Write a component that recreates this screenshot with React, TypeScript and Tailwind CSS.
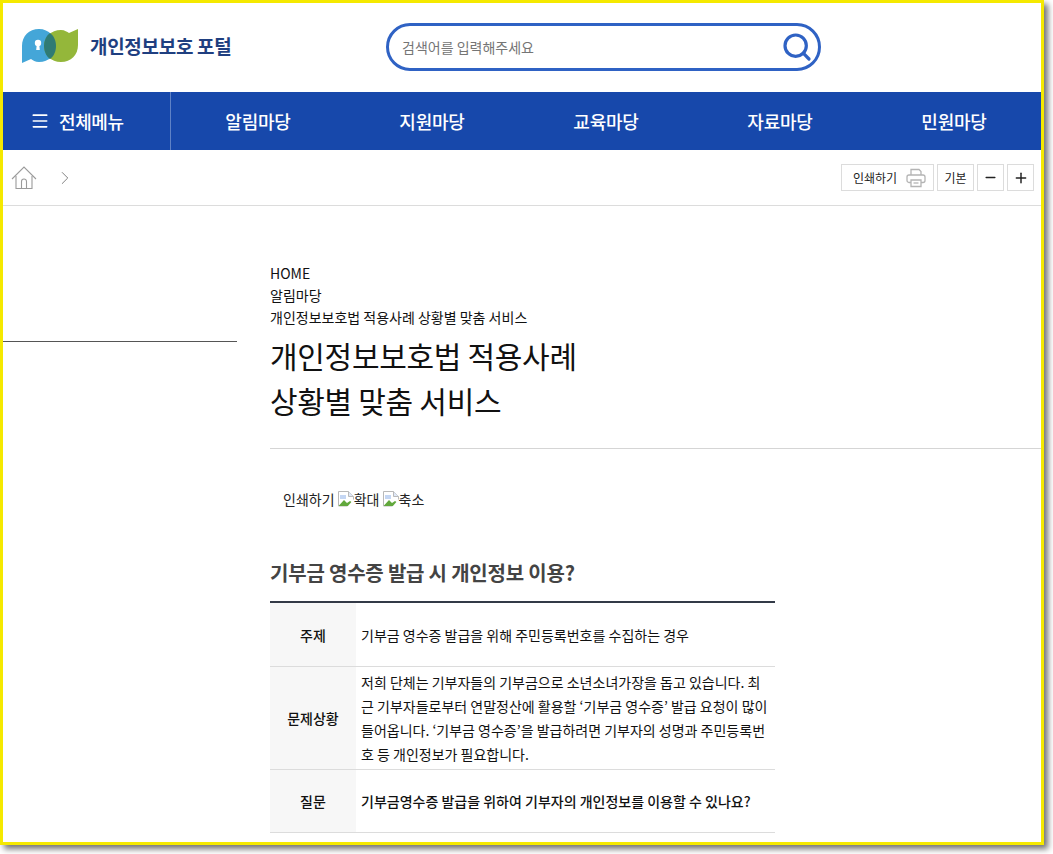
import { Menu, Search, Plus, Minus, ChevronRight } from "lucide-react";

const navItems = ["알림마당", "지원마당", "교육마당", "자료마당", "민원마당"];

const Logo = () => (
  <svg width="58" height="36" viewBox="0 0 58 36" className="shrink-0">
    <path d="M1 35V18C1 8 8 1 18 1c10 0 17 8 17 17s-7 16-17 16c-4 0-6-2-8-3-3 1-6 3-9 4z" fill="#44a6d8" />
    <path d="M57 1v16c0 10-7 17-17 17-10 0-17-7-17-16S30 2 40 2c4 0 6 2 8 3 3-1 6-3 9-4z" fill="#94b73a" />
    <path d="M29 5c4 3 6 8 6 13s-2 10-6 13c-4-3-6-8-6-13s2-10 6-13z" fill="#2f7b74" />
    <circle cx="17" cy="15" r="3.2" fill="#fff" />
    <path d="M15.8 16h2.4l.6 6h-3.6z" fill="#fff" />
  </svg>
);

const HomeIcon = () => (
  <svg width="26" height="24" viewBox="0 0 26 24" fill="none" stroke="#9b9b9b" strokeWidth="1.1">
    <path d="M1 13 13 1l12 12" />
    <path d="M5 10v12.500h16V10" />
    <path d="M10.500 22.500v-7a2.500 2.500 0 0 1 5 0v7" />
  </svg>
);

const PrintIcon = () => (
  <svg width="20" height="20" viewBox="0 0 20 20" fill="none" stroke="#b4b4b4" strokeWidth="1.300">
    <path d="M5 7V1.500h8L15 3.500V7" />
    <rect x="1" y="7" width="18" height="7.500" rx="2" />
    <path d="M5 12h10v6.500H5z" fill="#fff" />
    <path d="M7.500 15h5" />
  </svg>
);

const BrokenImage = () => (
  <svg width="16" height="16" viewBox="0 0 16 16" className="inline-block align-[-2px]">
    <path d="M.5.500h10l5 5v9.500H.5z" fill="#fff" stroke="#b9b9b9" />
    <path d="M10.500.500v5h5" fill="#dfe8f7" stroke="#b9b9b9" />
    <path d="M2 4h6v4H2z" fill="#c4d6f3" />
    <path d="M1 14.500 6 9l3 3 3-2 3 2v3H1z" fill="#62a83c" />
    <path d="M9 16 16 8v8z" fill="#fff" />
  </svg>
);

const rows = [
  {
    head: "주제",
    h: "h-[64px]",
    body: <span>기부금 영수증 발급을 위해 주민등록번호를 수집하는 경우</span>,
  },
  {
    head: "문제상황",
    h: "h-[103px]",
    body: (
      <span>
        저희 단체는 기부자들의 기부금으로 소년소녀가장을 돕고 있습니다. 최근 기부자들로부터 연말정산에 활용할 ‘기부금 영수증’ 발급 요청이 많이 들어옵니다. ‘기부금 영수증’을 발급하려면 기부자의 성명과 주민등록번호 등 개인정보가 필요합니다.
      </span>
    ),
  },
  {
    head: "질문",
    h: "h-[63px]",
    body: <span className="font-medium">기부금영수증 발급을 위하여 기부자의 개인정보를 이용할 수 있나요?</span>,
  },
];

export default function App() {
  return (
    <div className="w-[1053px] h-[854px] bg-white overflow-hidden font-['Noto_Sans_CJK_KR','Noto_Sans',sans-serif]">
      <div className="w-[1044px] h-[845px] border-[3px] border-[#f5e900] bg-white overflow-hidden shadow-[4px_4px_6px_rgba(0,0,0,0.55)]">
        {/* Header */}
        <header className="h-[89px] flex items-center pl-[18px]">
          <div className="w-[365px] flex items-center gap-[11px] pb-[3px]">
            <Logo />
            <span className="text-[19px] font-bold tracking-[-0.3px] text-[#1f3f80]">개인정보보호 포털</span>
          </div>
          <div className="w-[435px] h-[48px] rounded-full border-[3px] border-[#2f62c4] flex items-center justify-between pl-[13px] pr-[5px] mb-[1px]">
            <span className="text-[14px] text-[#757575]">검색어를 입력해주세요</span>
            <Search size={32} strokeWidth={2.4} className="text-[#2f62c4]" />
          </div>
        </header>

        {/* Nav */}
        <nav className="h-[58px] bg-[#1748ab] flex items-center text-white">
          <div className="w-[168px] h-full flex items-center gap-[9px] pl-[27px] border-r border-[#5f82c6] text-[18px] font-medium tracking-[-0.4px]">
            <Menu size={20} strokeWidth={2} />
            전체메뉴
          </div>
          <ul className="flex-1 flex pl-[-1px]">
            {navItems.map((item) => (
              <li key={item} className="flex-1 text-center text-[18px] font-medium tracking-[-0.2px]">
                {item}
              </li>
            ))}
          </ul>
        </nav>

        {/* Location bar */}
        <div className="h-[56px] border-b border-[#dcdcdc] flex items-center justify-between pl-[8px] pr-[7px]">
          <div className="flex items-center gap-[17px]">
            <HomeIcon />
            <ChevronRight size={22} strokeWidth={1} className="text-[#777]" />
          </div>
          <div className="flex items-center gap-[3px] text-[12px] text-[#222]">
            <div className="h-[27px] w-[93px] border border-[#dcdcdc] flex items-center justify-between pl-[11px] pr-[7px]">
              인쇄하기
              <PrintIcon />
            </div>
            <div className="h-[27px] w-[37px] border border-[#dcdcdc] flex items-center justify-center">기본</div>
            <div className="h-[27px] w-[27px] border border-[#dcdcdc] flex items-center justify-center">
              <Minus size={15} strokeWidth={2.2} />
            </div>
            <div className="h-[27px] w-[27px] border border-[#dcdcdc] flex items-center justify-center">
              <Plus size={16} strokeWidth={2.2} />
            </div>
          </div>
        </div>

        {/* Body */}
        <div className="flex">
          <aside className="w-[234px] shrink-0 h-[136px] border-b border-[#555]" />
          <main className="ml-[33px] flex-1 pt-[56px]">
            <div className="text-[14px] leading-[22px] text-[#111]">
              <p>HOME</p>
              <p>알림마당</p>
              <p>개인정보보호법 적용사례 상황별 맞춤 서비스</p>
            </div>
            <h1 className="mt-[5px] text-[30px] leading-[45px] text-[#111] tracking-[-0.3px]">
              개인정보보호법 적용사례
              <br />
              상황별 맞춤 서비스
            </h1>
            <div className="mt-[25px] border-t border-[#d5d5d5] pt-[40px] pl-[13px] text-[14px] leading-[20px] text-[#222]">
              인쇄하기 <BrokenImage />확대 <BrokenImage />축소
            </div>
            <h2 className="mt-[50px] text-[20px] leading-[28px] font-bold text-[#444] tracking-[-0.2px]">
              기부금 영수증 발급 시 개인정보 이용?
            </h2>
            <div className="mt-[14px] w-[505px] border-t-2 border-[#333a47] text-[14px] leading-[24px] text-[#111]">
              {rows.map((row) => (
                <div key={row.head} className={`flex border-b border-[#dcdcdc] ${row.h}`}>
                  <div className="w-[86px] shrink-0 bg-[#f7f7f7] flex items-center justify-center font-medium">{row.head}</div>
                  <div className="flex-1 flex items-center pl-[5px] pr-[5px]">{row.body}</div>
                </div>
              ))}
            </div>
          </main>
        </div>
      </div>
    </div>
  );
}
